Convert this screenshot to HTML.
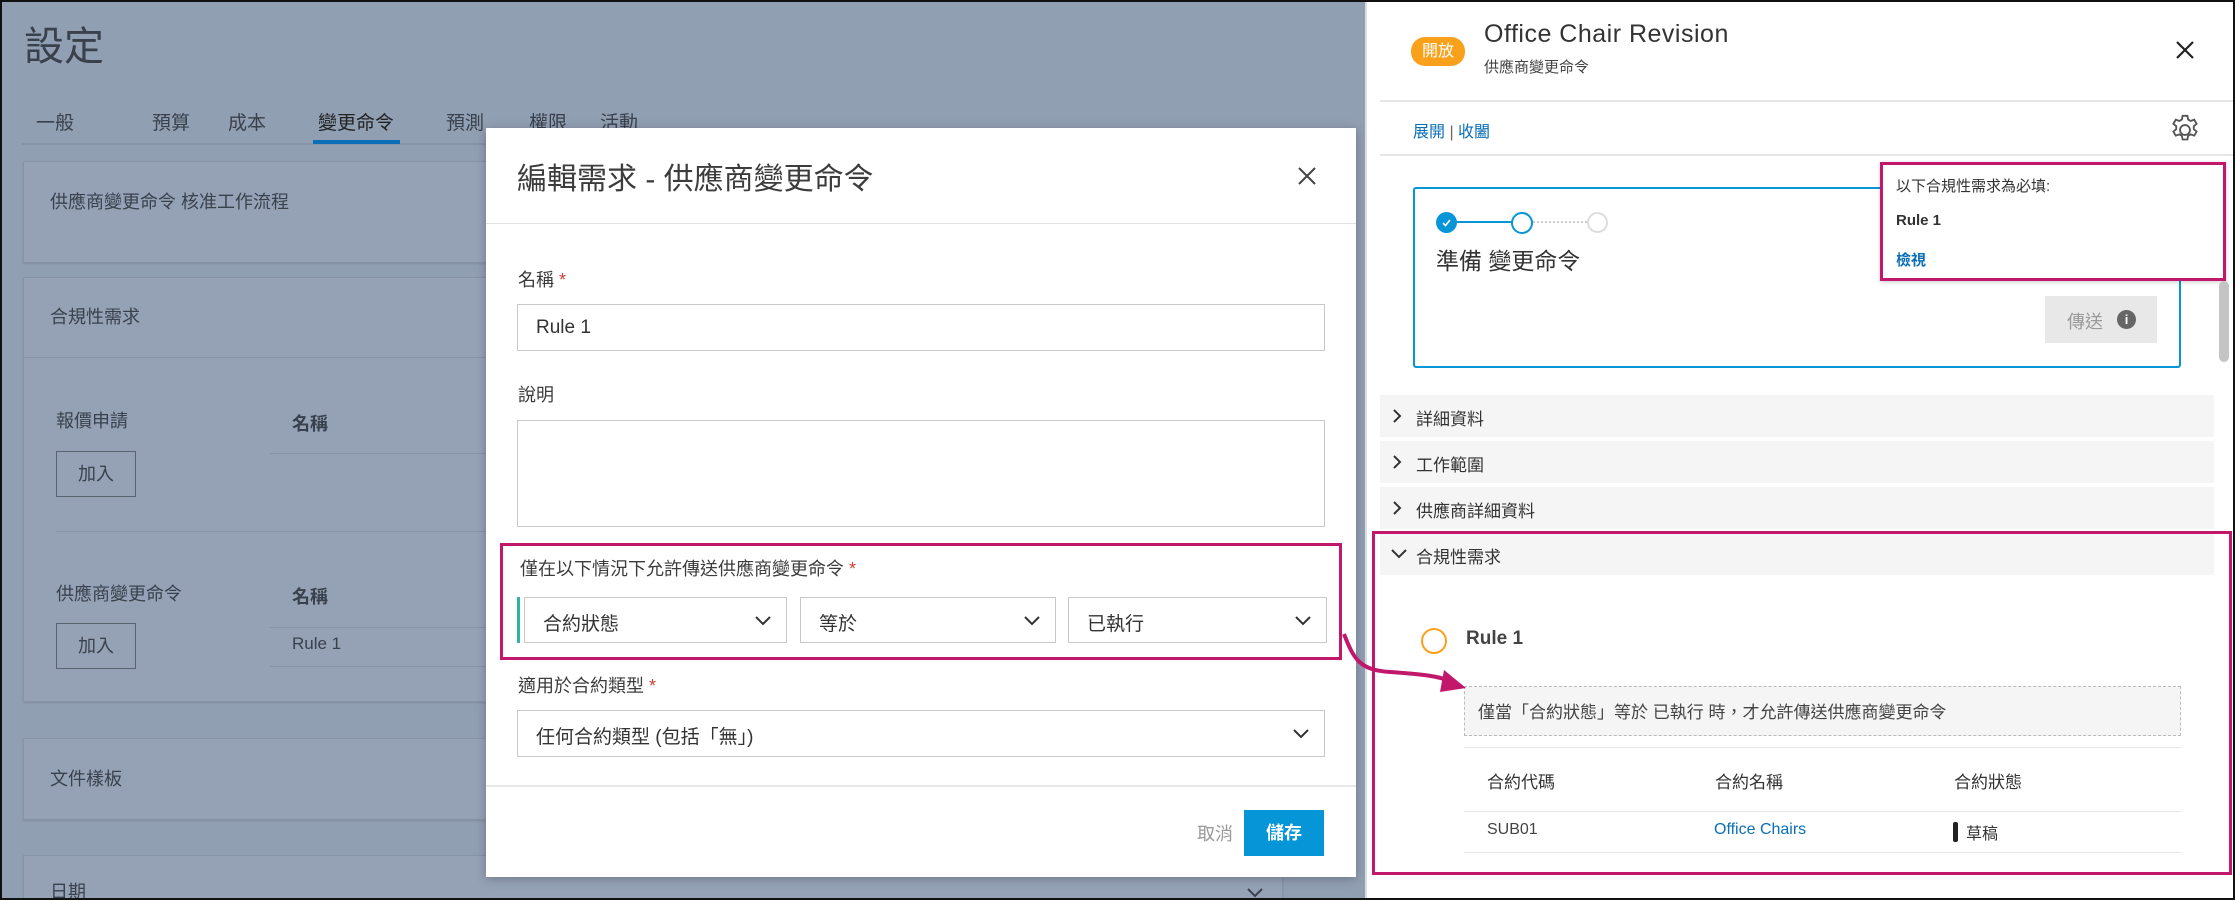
<!DOCTYPE html>
<html style="width:2235px;height:900px;overflow:hidden"><head><meta charset="utf-8"><style>
*{box-sizing:border-box;margin:0;padding:0}
body{width:2235px;height:900px;position:relative;overflow:hidden;background:#919fb3;font-family:"Liberation Sans","Noto Sans CJK TC",sans-serif;color:#3c3c3c;font-size:18px}
.a{position:absolute;white-space:nowrap}
.card{position:absolute;background:#95a2b6;border:1px solid #8794a8;box-shadow:0 1px 2px rgba(0,0,0,.12)}
.bg{color:#39414c}
.inp{position:absolute;border:1px solid #c8c8c8;background:#fff}
.sel{position:absolute;border:1px solid #c8c8c8;background:#fff;height:46px}
.sel span{position:absolute;left:18px;top:11px;font-size:19px;color:#333}
.sel svg{position:absolute;right:14px;top:14px}
.acc{position:absolute;left:1380px;width:834px;height:42px;background:#f5f5f5}
.acc span{position:absolute;left:36px;top:10px;font-size:17px;color:#333}
.acc svg{position:absolute;left:10px;top:13px}
.mag{position:absolute;border:3px solid #c2186b}
</style></head><body>
<div style="position:absolute;left:0;top:0;width:2235px;height:900px;border:2px solid #111;z-index:20;pointer-events:none"></div>
<!-- background page -->
<div class="a bg" style="left:24px;top:14px;font-size:40px">設定</div>
<div class="a bg" style="left:36px;top:108px;font-size:19px">一般</div>
<div class="a bg" style="left:152px;top:108px;font-size:19px">預算</div>
<div class="a bg" style="left:228px;top:108px;font-size:19px">成本</div>
<div class="a bg" style="left:318px;top:108px;font-size:19px;color:#222">變更命令</div>
<div class="a bg" style="left:446px;top:108px;font-size:19px">預測</div>
<div class="a bg" style="left:529px;top:108px;font-size:19px">權限</div>
<div class="a bg" style="left:600px;top:108px;font-size:19px">活動</div>
<div class="a" style="left:22px;top:143px;width:470px;height:2px;background:#8794a8"></div>
<div class="a" style="left:313px;top:140px;width:87px;height:4px;background:#0a6fb8"></div>
<div class="card" style="left:23px;top:161px;width:480px;height:102px"></div>
<div class="a bg" style="left:50px;top:188px;font-size:18px">供應商變更命令 核准工作流程</div>
<div class="card" style="left:23px;top:277px;width:480px;height:425px"></div>
<div class="a bg" style="left:50px;top:303px;font-size:18px">合規性需求</div>
<div class="a" style="left:24px;top:357px;width:478px;height:1px;background:#8794a8"></div>
<div class="a bg" style="left:56px;top:407px;font-size:18px">報價申請</div>
<div class="a bg" style="left:292px;top:410px;font-size:18px;font-weight:bold">名稱</div>
<div class="a" style="left:270px;top:453px;width:230px;height:1px;background:#8794a8"></div>
<div class="a bg" style="left:56px;top:451px;width:80px;height:46px;border:1px solid #59636f;text-align:center;line-height:44px">加入</div>
<div class="a" style="left:56px;top:531px;width:446px;height:1px;background:#8794a8"></div>
<div class="a bg" style="left:56px;top:580px;font-size:18px">供應商變更命令</div>
<div class="a bg" style="left:292px;top:583px;font-size:18px;font-weight:bold">名稱</div>
<div class="a" style="left:270px;top:627px;width:230px;height:1px;background:#8794a8"></div>
<div class="a bg" style="left:56px;top:623px;width:80px;height:46px;border:1px solid #59636f;text-align:center;line-height:44px">加入</div>
<div class="a bg" style="left:292px;top:634px;font-size:17px">Rule 1</div>
<div class="a" style="left:270px;top:666px;width:230px;height:1px;background:#8794a8"></div>
<div class="card" style="left:23px;top:738px;width:480px;height:82px"></div>
<div class="a bg" style="left:50px;top:765px;font-size:18px">文件樣板</div>
<div class="card" style="left:23px;top:855px;width:1260px;height:44px"></div>
<div class="a bg" style="left:50px;top:878px;font-size:18px">日期</div>
<svg class="a" style="left:1246px;top:886px" width="18" height="12"><path d="M2 3L9 10L16 3" fill="none" stroke="#39414c" stroke-width="2"/></svg>
<!-- modal -->
<div class="a" style="left:486px;top:128px;width:870px;height:749px;background:#fff;box-shadow:0 2px 10px rgba(0,0,0,.25)"></div>
<div class="a" style="left:517px;top:154px;font-size:30px;color:#3c3c3c">編輯需求 - 供應商變更命令</div>
<svg class="a" style="left:1297px;top:166px" width="20" height="20"><path d="M2 2L18 18M18 2L2 18" stroke="#444" stroke-width="2"/></svg>
<div class="a" style="left:486px;top:223px;width:870px;height:1px;background:#e0e0e0"></div>
<div class="a" style="left:518px;top:266px;font-size:18px">名稱 <span style="color:#d04030">*</span></div>
<div class="inp" style="left:517px;top:304px;width:808px;height:47px"><span class="a" style="left:18px;top:12px;font-size:19px;color:#333">Rule 1</span></div>
<div class="a" style="left:518px;top:381px;font-size:18px">說明</div>
<div class="inp" style="left:517px;top:420px;width:808px;height:107px"></div>
<div class="a" style="left:520px;top:555px;font-size:18px">僅在以下情況下允許傳送供應商變更命令 <span style="color:#d04030">*</span></div>
<div class="a" style="left:517px;top:597px;width:3px;height:46px;background:#2bb5a0"></div>
<div class="sel" style="left:524px;top:597px;width:263px"><span>合約狀態</span><svg width="18" height="18"><path d="M2 5L9 12L16 5" fill="none" stroke="#333" stroke-width="2"/></svg></div>
<div class="sel" style="left:800px;top:597px;width:256px"><span>等於</span><svg width="18" height="18"><path d="M2 5L9 12L16 5" fill="none" stroke="#333" stroke-width="2"/></svg></div>
<div class="sel" style="left:1068px;top:597px;width:259px"><span>已執行</span><svg width="18" height="18"><path d="M2 5L9 12L16 5" fill="none" stroke="#333" stroke-width="2"/></svg></div>
<div class="mag" style="left:500px;top:543px;width:842px;height:117px"></div>
<div class="a" style="left:518px;top:672px;font-size:18px">適用於合約類型 <span style="color:#d04030">*</span></div>
<div class="sel" style="left:517px;top:710px;width:808px;height:47px"><span>任何合約類型 (包括「無」)</span><svg width="18" height="18"><path d="M2 5L9 12L16 5" fill="none" stroke="#333" stroke-width="2"/></svg></div>
<div class="a" style="left:486px;top:785px;width:870px;height:2px;background:#e8e8e8"></div>
<div class="a" style="left:1197px;top:820px;font-size:18px;color:#999">取消</div>
<div class="a" style="left:1244px;top:810px;width:80px;height:46px;background:#0696d7;color:#fff;font-weight:bold;font-size:18px;text-align:center;line-height:46px">儲存</div>
<!-- right panel -->
<div class="a" style="left:1365px;top:0;width:870px;height:900px;background:#fff;border-left:2px solid #d8dde4"></div>
<div class="a" style="left:1411px;top:37px;width:54px;height:29px;background:#f9a11b;border-radius:14px;color:#fff;font-size:16px;text-align:center;line-height:29px">開放</div>
<div class="a" style="left:1484px;top:20px;font-size:25px;color:#333;letter-spacing:.5px">Office Chair Revision</div>
<div class="a" style="left:1484px;top:56px;font-size:15px;color:#444">供應商變更命令</div>
<svg class="a" style="left:2175px;top:40px" width="20" height="20"><path d="M2 2L18 18M18 2L2 18" stroke="#222" stroke-width="2.2"/></svg>
<div class="a" style="left:1380px;top:100px;width:855px;height:2px;background:#e6e6e6"></div>
<div class="a" style="left:1413px;top:118px;font-size:16px;color:#0a6fb8">展開 <span style="color:#666">|</span> 收闔</div>
<svg class="a" style="left:2168px;top:113px" width="34" height="34" viewBox="0 0 24 24"><circle cx="12" cy="12" r="3.5" fill="none" stroke="#555" stroke-width="1.3"/><path d="M10.3 2h3.4l.5 2.6 1.8 1 2.5-.9 1.7 2.9-2 1.7v2.1l2 1.7-1.7 2.9-2.5-.9-1.8 1-.5 2.6h-3.4l-.5-2.6-1.8-1-2.5.9-1.7-2.9 2-1.7V9.3l-2-1.7 1.7-2.9 2.5.9 1.8-1z" fill="none" stroke="#555" stroke-width="1.3"/></svg>
<div class="a" style="left:1380px;top:154px;width:855px;height:2px;background:#e6e6e6"></div>
<div class="a" style="left:1413px;top:187px;width:768px;height:181px;border:2px solid #0696d7;border-radius:3px"></div>
<div class="a" style="left:1446px;top:221px;width:76px;height:2px;background:#0696d7"></div>
<div class="a" style="left:1522px;top:221px;width:76px;height:0;border-top:2px dotted #ccc"></div>
<div class="a" style="left:1436px;top:212px;width:21px;height:21px;border-radius:50%;background:#0696d7"></div>
<svg class="a" style="left:1440px;top:216px" width="13" height="13"><path d="M3 7L5.5 9.5L10 4" fill="none" stroke="#fff" stroke-width="1.6"/></svg>
<div class="a" style="left:1511px;top:212px;width:22px;height:22px;border-radius:50%;border:2.5px solid #0696d7;background:#fff"></div>
<div class="a" style="left:1587px;top:212px;width:21px;height:21px;border-radius:50%;border:2px solid #ddd;background:#fff"></div>
<div class="a" style="left:1436px;top:242px;font-size:23px;color:#333">準備 變更命令</div>
<div class="a" style="left:2045px;top:296px;width:112px;height:47px;background:#e8e8e8"></div>
<div class="a" style="left:2067px;top:308px;font-size:18px;color:#999">傳送</div>
<div class="a" style="left:2117px;top:310px;width:19px;height:19px;border-radius:50%;background:#666;color:#fff;font-size:13px;font-weight:bold;text-align:center;line-height:19px">i</div>
<div class="a" style="left:1880px;top:162px;width:346px;height:119px;background:#fff;box-shadow:0 1px 4px rgba(0,0,0,.2)"></div>
<div class="mag" style="left:1880px;top:162px;width:346px;height:119px"></div>
<div class="a" style="left:1896px;top:175px;font-size:15px;color:#333">以下合規性需求為必填:</div>
<div class="a" style="left:1896px;top:212px;font-size:15px;color:#333;font-weight:bold">Rule 1</div>
<div class="a" style="left:1896px;top:249px;font-size:15px;color:#0a6fb8;font-weight:bold">檢視</div>
<div class="a" style="left:2219px;top:281px;width:10px;height:81px;background:#c4c4c4;border-radius:5px"></div>
<div class="acc" style="top:395px"><svg width="14" height="16"><path d="M4 2L10 8L4 14" fill="none" stroke="#333" stroke-width="2"/></svg><span>詳細資料</span></div>
<div class="acc" style="top:441px"><svg width="14" height="16"><path d="M4 2L10 8L4 14" fill="none" stroke="#333" stroke-width="2"/></svg><span>工作範圍</span></div>
<div class="acc" style="top:487px"><svg width="14" height="16"><path d="M4 2L10 8L4 14" fill="none" stroke="#333" stroke-width="2"/></svg><span>供應商詳細資料</span></div>
<div class="acc" style="top:533px"><svg width="18" height="16"><path d="M2 4L9 11L16 4" fill="none" stroke="#333" stroke-width="2"/></svg><span>合規性需求</span></div>
<div class="a" style="left:1421px;top:628px;width:26px;height:26px;border-radius:50%;border:2.5px solid #f9a11b"></div>
<div class="a" style="left:1466px;top:628px;font-size:19px;font-weight:bold;color:#444">Rule 1</div>
<div class="a" style="left:1464px;top:686px;width:717px;height:50px;background:#f5f5f5;border:1px dashed #bbb"></div>
<div class="a" style="left:1478px;top:698px;font-size:17px;color:#444">僅當「合約狀態」等於 已執行 時，才允許傳送供應商變更命令</div>
<div class="a" style="left:1464px;top:747px;width:717px;height:1px;background:#e6e6e6"></div>
<div class="a" style="left:1487px;top:768px;font-size:17px;color:#333">合約代碼</div>
<div class="a" style="left:1715px;top:768px;font-size:17px;color:#333">合約名稱</div>
<div class="a" style="left:1954px;top:768px;font-size:17px;color:#333">合約狀態</div>
<div class="a" style="left:1464px;top:811px;width:717px;height:1px;background:#e6e6e6"></div>
<div class="a" style="left:1487px;top:821px;font-size:16px;color:#444">SUB01</div>
<div class="a" style="left:1714px;top:821px;font-size:16px;color:#0a6fb8">Office Chairs</div>
<div class="a" style="left:1953px;top:822px;width:5px;height:20px;background:#222;border-radius:2px"></div>
<div class="a" style="left:1966px;top:820px;font-size:16px;color:#333">草稿</div>
<div class="a" style="left:1464px;top:852px;width:717px;height:1px;background:#e6e6e6"></div>
<div class="mag" style="left:1372px;top:531px;width:860px;height:344px"></div>
<!-- arrow -->
<svg class="a" style="left:1340px;top:630px;z-index:5" width="140" height="80"><path d="M4 4C14 30 20 40 50 42C80 44 100 46 112 52" fill="none" stroke="#c2186b" stroke-width="4"/><path d="M104 40L126 58L100 62Z" fill="#c2186b"/></svg>
</body></html>
